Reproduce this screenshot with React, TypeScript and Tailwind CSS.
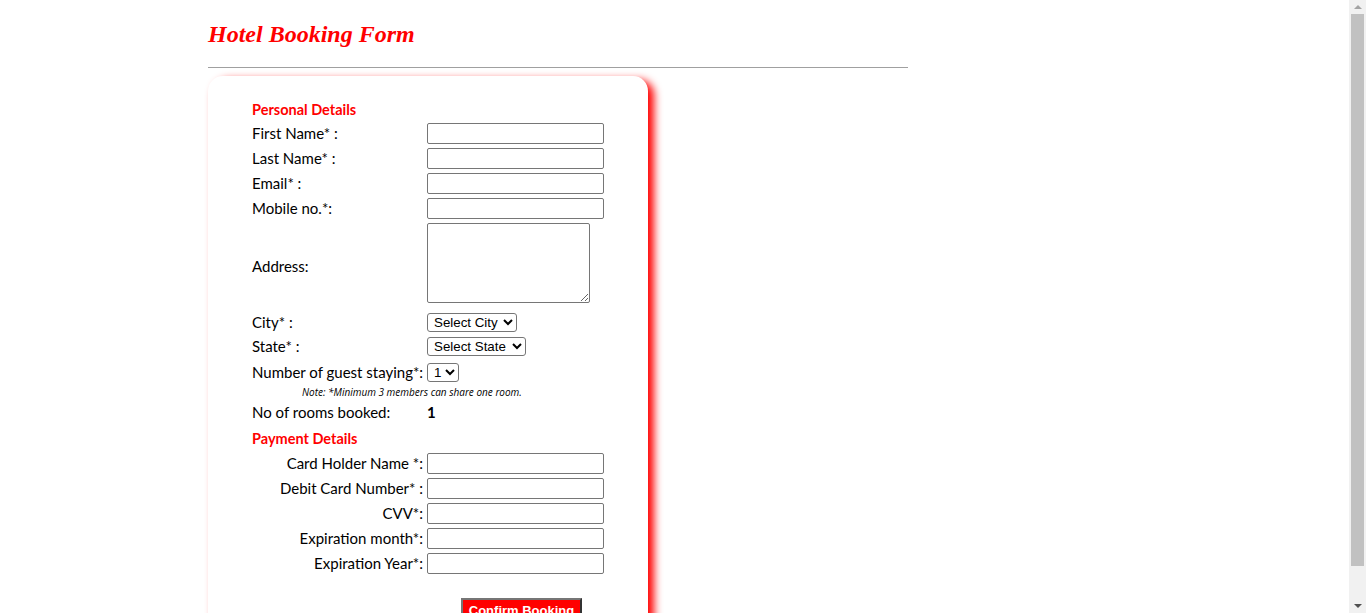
import React from 'react';

const label = "font-['Lato',sans-serif] text-[15px] text-black";
const field = 'w-[177px] h-[21px] border border-[#767676] rounded-[2px] bg-white px-[2px]';
const pick = "h-[19px] border border-[#767676] rounded-[3px] bg-white text-black font-['Liberation_Sans',sans-serif] text-[13.33px] pl-[2px]";

const Row: React.FC<{ text: string; right?: boolean; children: React.ReactNode; className?: string; labelClass?: string }> = ({
  text,
  right,
  children,
  className,
  labelClass,
}) => (
  <div className={`flex items-center ${className ?? 'h-[25px]'}`}>
    <div className={`w-[175px] pr-[4px] ${label} ${right ? 'text-right' : ''} ${labelClass ?? ''}`}>{text}</div>
    {children}
  </div>
);

// browser-style scrollbar strip on the right
const Scrollbar: React.FC = () => (
  <div className="w-[17px] h-[613px] shrink-0 sticky top-0 bg-[#f1f1f1] flex flex-col items-center">
    <div className="h-[14px] flex items-center justify-center">
      <svg width="8" height="4" viewBox="0 0 8 4">
        <path d="M0 4 L4 0 L8 4 Z" fill="#a3a3a3" />
      </svg>
    </div>
    <div className="w-[13px] h-[552px] bg-[#c1c1c1]" />
    <div className="flex-1 flex items-end justify-center pb-[5px]">
      <svg width="8" height="4" viewBox="0 0 8 4">
        <path d="M0 0 L8 0 L4 4 Z" fill="#505050" />
      </svg>
    </div>
  </div>
);

const App: React.FC = () => {
  // personal and payment field lists
  const personal = ['First Name* :', 'Last Name* :', 'Email* :', 'Mobile no.*:'];
  const payment = ['Card Holder Name *:', 'Debit Card Number* :', 'CVV*:', 'Expiration month*:', 'Expiration Year*:'];

  return (
    <div className="h-screen overflow-hidden bg-white flex">
      <div className="flex-1 pl-[208px] pt-[20px] pb-[10px]">
        <h1 className="font-['Liberation_Serif',serif] italic font-bold text-[24px] leading-[28px] text-[#ff0000]">
          Hotel Booking Form
        </h1>
        <div className="w-[700px] h-px bg-[#a0a0a0] mt-[19px] mb-[8px]" />

        <div className="w-[440px] rounded-[15px] bg-white shadow-[6px_4px_8px_#ff0000] pl-[44px] pt-[23px] pb-[12px]">
          <div className="h-[22px] flex items-center font-['Lato',sans-serif] font-bold text-[14.5px] text-[#ff0000]">
            Personal Details
          </div>
          {personal.map((p) => (
            <Row key={p} text={p}>
              <input className={field} />
            </Row>
          ))}
          <Row text="Address:" className="h-[84px]" labelClass="pt-[6px]">
            <textarea className="w-[163px] h-[80px] border border-[#767676] rounded-[2px] bg-white" />
          </Row>
          <Row text="City* :" className="h-[24px] mt-[5px]">
            <select className={`${pick} w-[90px]`}>
              <option>Select City</option>
              <option>Mumbai</option>
              <option>Delhi</option>
            </select>
          </Row>
          <Row text="State* :" className="h-[24px]">
            <select className={`${pick} w-[99px]`}>
              <option>Select State</option>
              <option>Maharashtra</option>
              <option>Delhi</option>
            </select>
          </Row>
          <div className="flex items-center h-[24px] mt-[2px]">
            <div className={`pr-[4px] whitespace-nowrap ${label}`}>Number of guest staying*:</div>
            <select className={`${pick} w-[32px]`}>
              <option>1</option>
              <option>2</option>
              <option>3</option>
            </select>
          </div>
          <div className="h-[16px] flex items-center pl-[50px] font-['Open_Sans',sans-serif] italic text-[10px] text-black">
            Note: *Minimum 3 members can share one room.
          </div>
          <Row text="No of rooms booked:" className="h-[24px]">
            <span className="font-['Lato',sans-serif] font-bold text-[15px] text-black">1</span>
          </Row>
          <div className="h-[24px] mt-[3px] flex items-center font-['Lato',sans-serif] font-bold text-[14.5px] text-[#ff0000]">
            Payment Details
          </div>
          {payment.map((p) => (
            <Row key={p} text={p} right>
              <input className={field} />
            </Row>
          ))}
          <div className="pl-[209px] mt-[21px]">
            <button className="h-[25px] w-[121px] bg-[#ff0000] text-white font-['Liberation_Sans',sans-serif] font-bold text-[13px] border-2 border-t-[#767676] border-l-[#767676] border-r-[#333333] border-b-[#333333]">
              Confirm Booking
            </button>
          </div>
        </div>
      </div>
      <Scrollbar />
    </div>
  );
};

export default App;
